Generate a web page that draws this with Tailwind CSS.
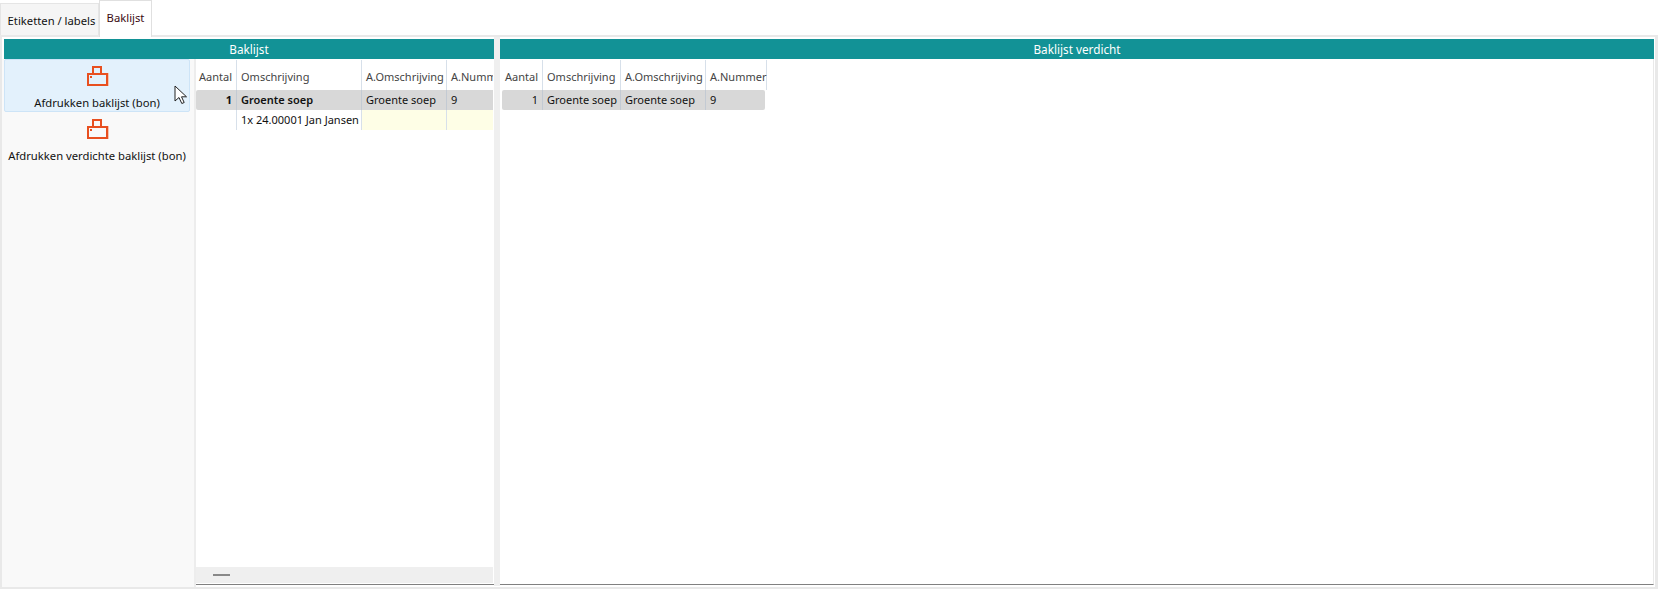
<!DOCTYPE html>
<html lang="en">
<head>
    <meta charset="UTF-8">
    <title>Baklijst</title>
    <script src="https://cdn.jsdelivr.net/npm/@tailwindcss/browser@4"></script>
</head>
<body class="bg-white font-['Noto_Sans',sans-serif] text-[11px] leading-[16px] whitespace-nowrap text-[#111]">
    <div class="relative flex h-[589px] w-[1658px] flex-col overflow-hidden">
        <!-- Tabs -->
        <div class="flex h-[35px] items-end">
            <div class="flex h-[32px] w-[99px] items-center justify-center border-x border-t border-[#e5e5e5] bg-[#f5f5f5] pt-[2px] pl-[4px] text-[11.25px]">Etiketten / labels</div>
            <div class="z-10 -mb-[2px] flex h-[37px] w-[53px] items-center justify-center border-x border-t border-[#e0e0e0] bg-white pb-[2px] text-[11.25px] text-[#3a0a12]">Baklijst</div>
        </div>

        <!-- Tab body -->
        <div class="flex h-[554px] w-[1658px] border-t-2 border-r-[3px] border-b-2 border-l-2 border-[#e9e9e9] bg-white">
            <!-- Baklijst panel -->
            <div class="flex h-full w-[492px] shrink-0 flex-col pt-[2px] pl-[2px]">
                <div class="flex h-[20px] shrink-0 items-center justify-center bg-[#129296] text-[11.75px] text-white">Baklijst</div>
                <div class="flex min-h-0 flex-1">
                    <div class="-ml-[2px] w-[194px] shrink-0 border-r-2 border-[#ededed] bg-[#f9f9f9] pl-[2px]">
                        <button class="mb-px flex h-[53px] w-[186px] flex-col items-center rounded-[2px] border border-[#cde4f7] bg-[#e3f1fc] pt-[6px] text-[11.25px]">
                            <svg class="ml-[2px] h-[20px] w-[22px] shrink-0" viewBox="0 0 22 20" fill="none">
                                <path d="M21.5 7v13H1" stroke="#f6c4b0"/>
                                <path d="M6 7V1h8v6M1 8h19v11H1z" stroke="#e84f1f" stroke-width="2"/>
                                <path d="M3 10h2v2H3z" fill="#e84f1f"/>
                            </svg>
                            <span class="mt-[9px]">Afdrukken baklijst (bon)</span>
                        </button>
                        <button class="flex h-[53px] w-[186px] flex-col items-center pt-[6px] text-[11.25px]">
                            <svg class="ml-[2px] h-[20px] w-[22px] shrink-0" viewBox="0 0 22 20" fill="none">
                                <path d="M21.5 7v13H1" stroke="#f6c4b0"/>
                                <path d="M6 7V1h8v6M1 8h19v11H1z" stroke="#e84f1f" stroke-width="2"/>
                                <path d="M3 10h2v2H3z" fill="#e84f1f"/>
                            </svg>
                            <span class="mt-[9px]">Afdrukken verdichte baklijst (bon)</span>
                        </button>
                    </div>
                    <div class="mb-[2px] flex min-w-0 flex-1 flex-col border-b border-[#808080] pr-px">
                        <div class="min-h-0 flex-1 overflow-hidden pt-px">
                            <div class="grid h-[70px] w-[310px] grid-cols-[41px_125px_85px_59px] grid-rows-[30px_20px_20px]">
                                <div class="flex items-center justify-end border-r border-[#d7e0ea] pt-[3px] pr-[4px] text-[#444]">Aantal</div>
                                <div class="flex items-center border-r border-[#d7e0ea] pt-[3px] pl-[4px] text-[#444]">Omschrijving</div>
                                <div class="flex items-center border-r border-[#d7e0ea] pt-[3px] pl-[4px] text-[#444]">A.Omschrijving</div>
                                <div class="flex items-center pt-[3px] pl-[4px] text-[#444]">A.Nummer</div>
                                <div class="flex items-center justify-end rounded-l-[2px] border-r border-[#c3cad3] bg-[#d8d8d8] pr-[4px] font-bold">1</div>
                                <div class="flex items-center border-r border-[#c3cad3] bg-[#d8d8d8] pl-[4px] font-semibold">Groente soep</div>
                                <div class="flex items-center border-r border-[#c3cad3] bg-[#d8d8d8] pl-[4px]">Groente soep</div>
                                <div class="flex items-center bg-[#d8d8d8] pl-[4px]">9</div>
                                <div class="border-r border-[#d7e0ea]"></div>
                                <div class="flex items-center border-r border-[#d7e0ea] pl-[4px]">1x 24.00001 Jan Jansen</div>
                                <div class="border-r border-[#d7e0ea] bg-[#fefee6]"></div>
                                <div class="bg-[#fefee6]"></div>
                            </div>
                        </div>
                        <div class="mb-px flex h-[16px] shrink-0 items-center bg-[#efefef] pl-[17px]">
                            <div class="h-[2px] w-[17px] bg-[#888]"></div>
                        </div>
                    </div>
                </div>
            </div>

            <!-- Splitter -->
            <div class="mb-[1px] w-[6px] shrink-0 bg-[#efefef]"></div>

            <!-- Baklijst verdicht panel -->
            <div class="flex h-full min-w-0 flex-1 flex-col pt-[2px] pr-px">
                <div class="flex h-[20px] shrink-0 items-center justify-center bg-[#129296] text-[11.75px] text-white">Baklijst verdicht</div>
                <div class="mb-[2px] min-h-0 flex-1 border-r border-b border-r-[#e9e9e9] border-b-[#808080] pt-px pl-[2px]">
                    <div class="grid w-[265px] grid-cols-[41px_78px_85px_61px] grid-rows-[30px_20px]">
                        <div class="flex items-center justify-end border-r border-[#d7e0ea] pt-[3px] pr-[4px] text-[#444]">Aantal</div>
                        <div class="flex items-center border-r border-[#d7e0ea] pt-[3px] pl-[4px] text-[#444]">Omschrijving</div>
                        <div class="flex items-center border-r border-[#d7e0ea] pt-[3px] pl-[4px] text-[#444]">A.Omschrijving</div>
                        <div class="flex items-center border-r border-[#d7e0ea] pt-[3px] pl-[4px] text-[#444]">A.Nummer</div>
                        <div class="flex items-center justify-end rounded-l-[2px] border-r border-[#c3cad3] bg-[#d8d8d8] pr-[4px]">1</div>
                        <div class="flex items-center border-r border-[#c3cad3] bg-[#d8d8d8] pl-[4px]">Groente soep</div>
                        <div class="flex items-center border-r border-[#c3cad3] bg-[#d8d8d8] pl-[4px]">Groente soep</div>
                        <div class="mr-[2px] flex items-center rounded-r-[2px] bg-[#d8d8d8] pl-[4px]">9</div>
                    </div>
                </div>
            </div>
        </div>

        <!-- Mouse cursor -->
        <svg class="absolute top-[85px] left-[174px] h-[20px] w-[14px]" viewBox="0 0 14 20">
            <path d="M1 1v15l4-3.5 2.8 6 2.4-1-2.7-5.7h5z" fill="#fff" stroke="#222" stroke-width="1"/>
        </svg>
    </div>
</body>
</html>
